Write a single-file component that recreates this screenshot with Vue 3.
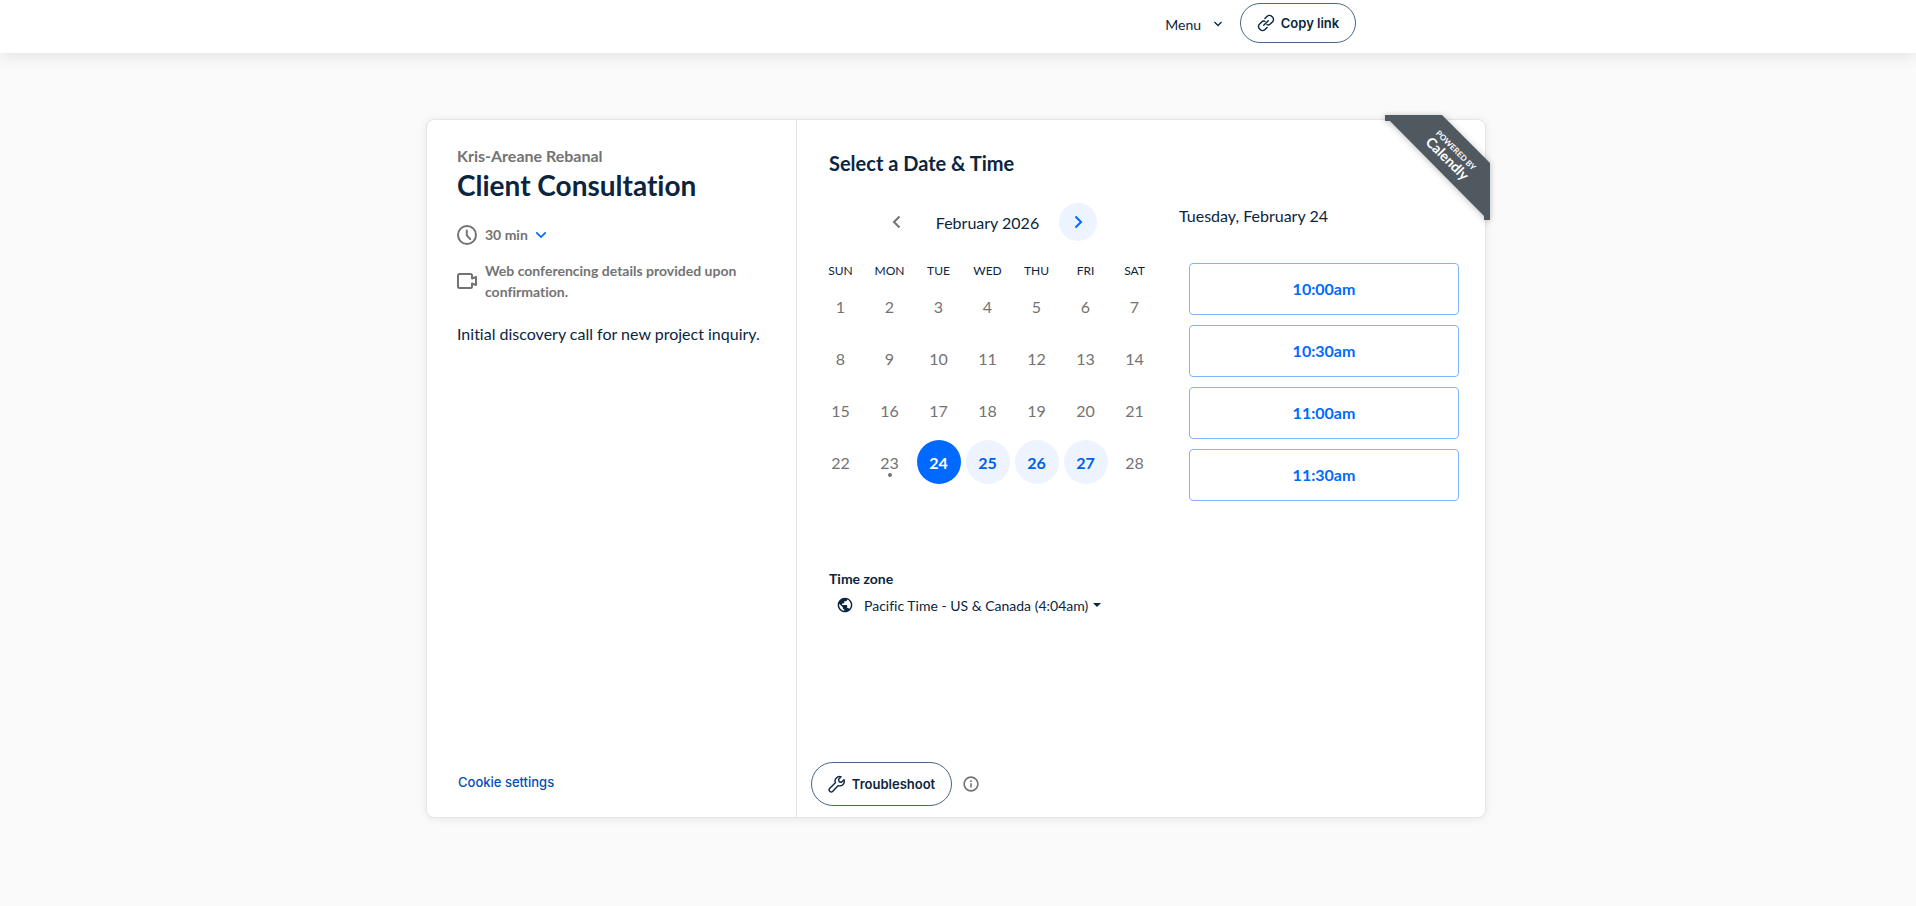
<script setup>
import { ref } from "vue";

const weekdays = ["SUN", "MON", "TUE", "WED", "THU", "FRI", "SAT"];
const weeks = [0, 1, 2, 3].map((w) => weekdays.map((_, d) => w * 7 + d + 1));
const available = [24, 25, 26, 27];
const today = 23;
const selected = ref(24);

const slots = ["10:00am", "10:30am", "11:00am", "11:30am"];
const duration = ref("30");
const timezone = ref("pacific");
</script>

<template>
  <div class="page">
    <header class="topbar">
      <div class="topbar-inner">
        <button type="button" class="menu">
          Menu
          <svg width="10" height="6" viewBox="0 0 10 6" fill="none" stroke="currentColor" stroke-width="1.3">
            <path d="M1.500 1l3.500 3.500L8.500 1" />
          </svg>
        </button>
        <button type="button" class="pill copy">
          <svg width="18" height="18" viewBox="0 0 18 18" fill="none" stroke="currentColor" stroke-width="1.4" stroke-linecap="round" stroke-linejoin="round">
            <path d="M7.900 4.600l2.300-2.300a3.100 3.100 0 0 1 4.400 0l1 1a3.100 3.100 0 0 1 0 4.400l-2.300 2.300a3.100 3.100 0 0 1-3.300.7" />
            <path d="M10.100 13.400l-2.300 2.300a3.100 3.100 0 0 1-4.400 0l-1-1a3.100 3.100 0 0 1 0-4.400L4.700 8a3.100 3.100 0 0 1 3.300-.7" />
            <path d="M6.700 11.300l4.600-4.600" />
          </svg>
          Copy link
        </button>
      </div>
    </header>

    <main>
      <div class="card">
        <section class="info">
          <p class="host">Kris-Areane Rebanal</p>
          <h1>Client Consultation</h1>

          <div class="detail">
            <svg width="20" height="20" viewBox="0 0 20 20" fill="none" stroke="currentColor" stroke-width="2" stroke-linecap="round">
              <circle cx="10" cy="10" r="9" />
              <path d="M9.800 5.500v4.800l3.400 3.800" />
            </svg>
            <span class="duration">
              <select v-model="duration" aria-label="Duration">
                <option value="30">30 min</option>
              </select>
              <svg width="12" height="8" viewBox="0 0 12 8" fill="none" stroke="currentColor" stroke-width="1.7">
                <path d="M1.300 1.300L6 6l4.700-4.700" />
              </svg>
            </span>
          </div>

          <div class="detail web">
            <svg width="20" height="20" viewBox="0 0 20 20" fill="none" stroke="currentColor" stroke-width="2" stroke-linejoin="round">
              <path d="M15 7.500V4.500A1.500 1.500 0 0 0 13.500 3h-11A1.500 1.500 0 0 0 1 4.500v11A1.500 1.500 0 0 0 2.500 17h11a1.500 1.500 0 0 0 1.500-1.500v-3l4 1.500V6z" />
            </svg>
            <span>Web conferencing details provided upon confirmation.</span>
          </div>

          <p class="description">Initial discovery call for new project inquiry.</p>
          <a href="#" class="cookie">Cookie settings</a>
        </section>

        <section class="booking">
          <h2>Select a Date &amp; Time</h2>

          <div class="picker">
            <div class="calendar">
              <div class="month">
                <button type="button" class="nav" aria-label="Previous month" disabled>
                  <svg width="9" height="14" viewBox="0 0 9 14" fill="none" stroke="currentColor" stroke-width="2">
                    <path d="M7.500 1.500L2 7l5.500 5.500" />
                  </svg>
                </button>
                <span>February 2026</span>
                <button type="button" class="nav next" aria-label="Next month">
                  <svg width="9" height="14" viewBox="0 0 9 14" fill="none" stroke="currentColor" stroke-width="2">
                    <path d="M1.500 1.500L7 7l-5.500 5.500" />
                  </svg>
                </button>
              </div>

              <table>
                <thead>
                  <tr>
                    <th v-for="d in weekdays" :key="d" scope="col">{{ d }}</th>
                  </tr>
                </thead>
                <tbody>
                  <tr v-for="(week, i) in weeks" :key="i">
                    <td v-for="day in week" :key="day">
                      <button
                        type="button"
                        class="day"
                        :class="{ open: available.includes(day), selected: day === selected, today: day === today }"
                        :disabled="!available.includes(day)"
                        @click="selected = day"
                      >
                        {{ day }}
                      </button>
                    </td>
                  </tr>
                </tbody>
              </table>
            </div>

            <div class="times">
              <h3>Tuesday, February {{ selected }}</h3>
              <div class="slots">
                <button v-for="s in slots" :key="s" type="button" class="slot">{{ s }}</button>
              </div>
            </div>
          </div>

          <div class="zone">
            <label for="timezone">Time zone</label>
            <div class="zone-row">
              <svg width="16" height="16" viewBox="0 0 24 24" fill="currentColor">
                <path d="M12 1C5.900 1 1 5.900 1 12s4.900 11 11 11 11-4.900 11-11S18.100 1 12 1zm-1.100 19.700C6.600 20.200 3.200 16.500 3.200 12c0-.7.1-1.300.2-2l5.300 5.300v1.100c0 1.200 1 2.200 2.200 2.200v2.100zm7.600-2.800c-.3-.9-1.100-1.500-2.100-1.500h-1.100v-3.300c0-.6-.5-1.100-1.100-1.100H7.600V9.800h2.200c.6 0 1.100-.5 1.100-1.100V6.500h2.200c1.200 0 2.200-1 2.200-2.200v-.5c3.200 1.300 5.500 4.500 5.500 8.200 0 2.300-.9 4.400-2.300 5.900z" />
              </svg>
              <select id="timezone" v-model="timezone">
                <option value="pacific">Pacific Time - US &amp; Canada (4:04am)</option>
              </select>
              <svg width="8" height="4" viewBox="0 0 8 4" fill="currentColor"><path d="M0 0h8L4 4z" /></svg>
            </div>
          </div>

          <div class="support">
            <button type="button" class="pill troubleshoot">
              <svg width="18" height="18" viewBox="0 0 18 18" fill="none" stroke="currentColor" stroke-width="1.4" stroke-linecap="round" stroke-linejoin="round">
                <path d="M16 4.700l-2.500 2.500-2.400-.5-.5-2.400L13.100 1.800a4.500 4.500 0 0 0-5.700 5.900l-5.600 5.500a2.100 2.100 0 0 0 3 3l5.500-5.600a4.500 4.500 0 0 0 5.700-5.900z" />
              </svg>
              Troubleshoot
            </button>
            <svg class="hint" width="16" height="16" viewBox="0 0 16 16" fill="none" stroke="currentColor" stroke-width="1.6">
              <circle cx="8" cy="8" r="6.900" />
              <path d="M8 7.200v4.300M8 4.300v1.600" />
            </svg>
          </div>
        </section>

        <a href="#" class="badge">
          <svg width="105" height="105" viewBox="0 0 105 105">
            <path d="M0 0h57l48 48v57h-6v-4L5 6H0z" fill="#50595f" />
          </svg>
          <span class="badge-text"><small>POWERED BY</small><b>Calendly</b></span>
        </a>
      </div>
    </main>
  </div>
</template>

<style>
body {
  background-color: #fafafa;
}
</style>

<style scoped>
.page {
  color: #0b2540;
  font-family: Lato, "Open Sans", sans-serif;
  font-size: 16px;
  font-variant-ligatures: none;
}
.page * {
  box-sizing: border-box;
}
button,
select {
  padding: 0;
  border: 0;
  background: none;
  color: inherit;
  font: inherit;
  font-variant-ligatures: none;
  cursor: pointer;
}
select {
  appearance: none;
}
h1,
h2,
h3,
p {
  margin: 0;
}
svg {
  flex-shrink: 0;
}
a {
  text-decoration: none;
}
.topbar {
  height: 53px;
  background-color: #fff;
  box-shadow: 0 1px 16px rgba(0, 0, 0, 0.12);
}
.topbar-inner {
  display: flex;
  justify-content: flex-end;
  gap: 17px;
  max-width: 796px;
  margin: 0 auto;
  padding-top: 3px;
}
.menu {
  display: flex;
  align-items: center;
  gap: 12px;
  font-size: 14px;
  padding-top: 2px;
}
.pill {
  display: flex;
  align-items: center;
  justify-content: center;
  gap: 6px;
  border: 1px solid #476788;
  border-radius: 22px;
  background-color: #fff;
  font-family: Inter, sans-serif;
  font-size: 13px;
  font-weight: 600;
}
.copy {
  width: 116px;
  height: 40px;
}
main {
  padding: 66px 4px 60px 0;
}
.card {
  position: relative;
  display: grid;
  grid-template-columns: 370px 1fr;
  max-width: 1060px;
  min-height: 699px;
  margin: 0 auto;
  border: 1px solid #e5e5e5;
  border-radius: 8px;
  background-color: #fff;
  box-shadow: 0 1px 8px rgba(0, 0, 0, 0.08);
}
.info {
  display: flex;
  flex-direction: column;
  padding: 25px 30px;
  border-right: 1px solid #e5e5e5;
}
.host {
  color: #737373;
  font-weight: 700;
  line-height: 22px;
}
h1 {
  font-size: 28px;
  line-height: 36px;
}
.detail {
  display: flex;
  align-items: center;
  gap: 8px;
  margin-top: 21px;
  color: #737373;
  font-size: 14px;
  font-weight: 700;
  line-height: 21px;
}
.duration {
  display: flex;
  align-items: center;
  gap: 7px;
}
.duration svg {
  color: #0069ff;
}
.web {
  margin-top: 15px;
}
.description {
  margin-top: 20px;
  line-height: 24px;
}
.cookie {
  margin-top: auto;
  padding-left: 1px;
  color: #004eba;
  font-family: Inter, sans-serif;
  font-size: 13px;
  font-weight: 500;
  line-height: 20px;
}
.booking {
  display: flex;
  flex-direction: column;
  padding: 30px 26px 11px 19px;
}
h2 {
  padding-left: 13px;
  font-size: 20px;
  line-height: 26px;
}
.picker {
  display: grid;
  grid-template-columns: 343px 1fr;
  gap: 20px;
  margin-top: 27px;
}
.month {
  display: flex;
  align-items: center;
  justify-content: center;
  gap: 20px;
}
.nav {
  display: flex;
  align-items: center;
  justify-content: center;
  width: 38px;
  height: 38px;
  border-radius: 50%;
  color: #737373;
}
.next {
  background-color: #edf4ff;
  color: #0069ff;
}
table {
  width: 100%;
  margin-top: 20px;
  border-collapse: collapse;
  table-layout: fixed;
}
th {
  height: 19px;
  padding: 0;
  font-size: 12px;
  font-weight: 400;
}
td {
  height: 52px;
  padding: 0;
}
.day {
  position: relative;
  display: block;
  width: 44px;
  height: 44px;
  margin: 0 auto;
  border-radius: 50%;
  color: #737373;
}
.open {
  background-color: #edf4ff;
  color: #0060e6;
  font-weight: 700;
}
.selected {
  background-color: #0069ff;
  color: #fff;
}
.today::after {
  content: "";
  position: absolute;
  left: 20px;
  bottom: 7px;
  width: 4px;
  height: 4px;
  border-radius: 50%;
  background-color: #737373;
}
h3 {
  font-size: 16px;
  font-weight: 400;
  line-height: 26px;
}
.slots {
  display: grid;
  gap: 10px;
  padding: 34px 0 0 10px;
}
.slot {
  height: 52px;
  padding-bottom: 2px;
  border: 1px solid #80b4ff;
  border-radius: 4px;
  color: #0069ff;
  font-weight: 700;
}
.zone {
  margin-top: 68px;
  padding-left: 13px;
  font-size: 14px;
}
.zone label {
  display: block;
  font-weight: 700;
  line-height: 20px;
}
.zone-row {
  display: flex;
  align-items: center;
  height: 32px;
  padding-left: 8px;
}
.zone-row select {
  margin: 0 4px 0 11px;
}
.support {
  display: flex;
  align-items: center;
  gap: 11px;
  margin-top: auto;
  margin-left: -5px;
}
.troubleshoot {
  width: 141px;
  height: 44px;
}
.hint {
  color: #737373;
}
.badge {
  position: absolute;
  top: -5px;
  right: -5px;
  width: 105px;
  height: 105px;
  color: #fff;
}
.badge svg {
  display: block;
  filter: drop-shadow(0 1px 3px rgba(0, 0, 0, 0.25));
}
.badge-text {
  position: absolute;
  top: 28px;
  left: 36px;
  width: 60px;
  text-align: center;
  transform: rotate(45deg);
}
.badge-text small,
.badge-text b {
  display: block;
  font-size: 8px;
  font-weight: 700;
  line-height: 10px;
}
.badge-text b {
  font-size: 14px;
  line-height: 14px;
}
</style>
